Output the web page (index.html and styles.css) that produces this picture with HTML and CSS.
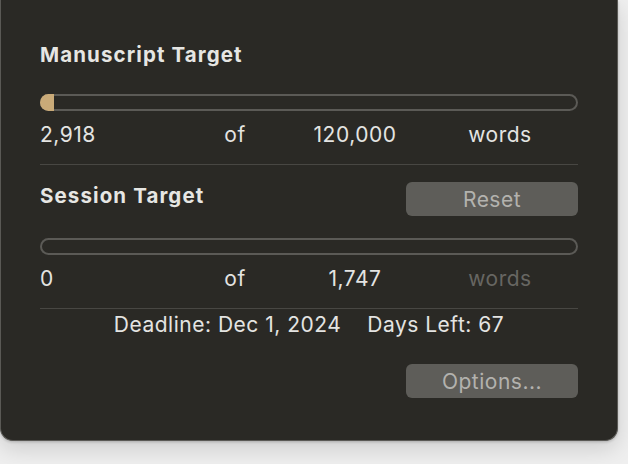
FILE: index.html
```html
<!DOCTYPE html>
<html>
<head>
<meta charset="utf-8">
<link rel="stylesheet" href="styles.css">
</head>
<body>
<div class="panel">
  <h2 class="title">Manuscript Target</h2>
  <div class="bar"><div class="fill" style="width:14px"></div></div>
  <div class="row">
    <span class="c1">2,918</span>
    <span class="c2">of</span>
    <span class="c3">120,000</span>
    <span class="c4">words</span>
  </div>
  <div class="divider"></div>
  <div class="session-head">
    <h2 class="title session-title">Session Target</h2>
    <button class="btn">Reset</button>
  </div>
  <div class="bar bar-second"></div>
  <div class="row">
    <span class="c1">0</span>
    <span class="c2">of</span>
    <span class="c3">1,747</span>
    <span class="c4 dim">words</span>
  </div>
  <div class="divider"></div>
  <div class="deadline"><span>Deadline: Dec 1, 2024</span><span class="days">Days Left: 67</span></div>
  <div class="footer"><button class="btn">Options...</button></div>
</div>
</body>
</html>
```

FILE: styles.css
```css
html, body {
  margin: 0;
  padding: 0;
}
body {
  background: #efefef;
  width: 628px;
  height: 464px;
  overflow: hidden;
  font-family: "Inter", "Liberation Sans", sans-serif;
}
.panel {
  box-sizing: border-box;
  width: 618px;
  height: 441px;
  background: #2a2925;
  border: 1px solid #5a5955;
  border-top: none;
  border-radius: 0 0 13px 13px;
  padding: 43px 39px 0 39px;
  box-shadow: 0 8px 22px rgba(0, 0, 0, 0.14), 0 1px 3px rgba(0,0,0,0.2);
  color: #e4e4e2;
}
.title {
  margin: 0;
  font-size: 20.5px;
  letter-spacing: 1.1px;
  line-height: 24px;
  font-weight: 700;
  color: #e6e6e3;
}
.bar {
  margin-top: 27px;
  height: 17px;
  border-radius: 9px;
  box-shadow: inset 0 0 0 2px #5b5a56;
  overflow: hidden;
}
.fill {
  height: 100%;
  background: #c9aa78;
}
.bar-second {
  margin-top: 22px;
}
.row {
  margin-top: 12px;
  display: grid;
  grid-template-columns: 150px 90px 150px 140px;
  font-size: 21px;
  letter-spacing: 0.5px;
  line-height: 24px;
}
.c2, .c3, .c4 {
  text-align: center;
}
.dim {
  color: #676662;
}
.divider {
  margin-top: 17px;
  height: 1px;
  background: #484743;
}
.session-head {
  margin-top: 17px;
  display: flex;
  justify-content: space-between;
  align-items: flex-start;
}
.session-title {
  margin-top: 2px;
}
.btn {
  width: 172px;
  height: 34px;
  border: none;
  border-radius: 6px;
  background: #5e5d59;
  color: #b3b2ae;
  font-family: "Inter", "Liberation Sans", sans-serif;
  font-size: 21px;
  letter-spacing: 0.5px;
  padding: 0;
}
.deadline {
  margin-top: 4px;
  text-align: center;
  font-size: 21px;
  letter-spacing: 0.5px;
  line-height: 24px;
}
.days {
  margin-left: 26px;
}
.footer {
  margin-top: 27px;
  display: flex;
  justify-content: flex-end;
}
```
